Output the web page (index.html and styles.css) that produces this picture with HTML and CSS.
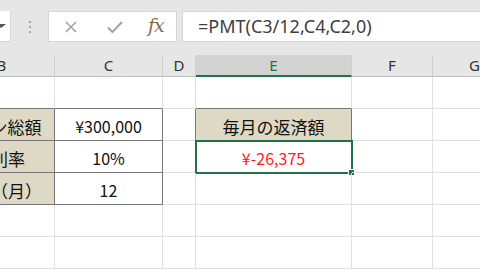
FILE: index.html
```html
<!DOCTYPE html>
<html lang="ja">
<head>
    <meta charset="UTF-8">
    <title>PMT</title>
    <link rel="stylesheet" href="styles.css">
</head>
<body>
    <div class="toolbar">
        <div class="name-box"><span class="drop"></span></div>
        <div class="grip"><i></i><i></i><i></i></div>
        <div class="icon-box">
            <svg class="btn" width="14" height="14" viewBox="0 0 14 14"><path d="M2 2 L12 12 M12 2 L2 12" stroke="#a3a3a3" stroke-width="1.6" fill="none"/></svg>
            <svg class="btn" width="18" height="14" viewBox="0 0 18 14"><path d="M2 7.5 L6.5 12 L16 2" stroke="#a3a3a3" stroke-width="2" fill="none"/></svg>
            <span class="fx">fx</span>
        </div>
        <div class="formula">=PMT(C3/12,C4,C2,0)</div>
    </div>

    <div class="sheet">
        <div class="col-head first">B</div>
        <div class="col-head">C</div>
        <div class="col-head">D</div>
        <div class="col-head selected">E</div>
        <div class="col-head">F</div>
        <div class="col-head">G</div>

        <div class="cell"></div>
        <div class="cell"></div>
        <div class="cell"></div>
        <div class="cell"></div>
        <div class="cell"></div>
        <div class="cell"></div>

        <div class="cell label">ローン総額</div>
        <div class="cell value">¥300,000</div>
        <div class="cell"></div>
        <div class="cell label">毎月の返済額</div>
        <div class="cell"></div>
        <div class="cell"></div>

        <div class="cell label">年利率</div>
        <div class="cell value">10%</div>
        <div class="cell"></div>
        <div class="cell value result active">¥-26,375</div>
        <div class="cell"></div>
        <div class="cell"></div>

        <div class="cell label">期間（月）</div>
        <div class="cell value">12</div>
        <div class="cell"></div>
        <div class="cell"></div>
        <div class="cell"></div>
        <div class="cell"></div>

        <div class="cell"></div>
        <div class="cell"></div>
        <div class="cell"></div>
        <div class="cell"></div>
        <div class="cell"></div>
        <div class="cell"></div>

        <div class="cell"></div>
        <div class="cell"></div>
        <div class="cell"></div>
        <div class="cell"></div>
        <div class="cell"></div>
        <div class="cell"></div>
    </div>
</body>
</html>
```

FILE: styles.css
```css
body {
    margin: 0;
    width: 480px;
    height: 270px;
    overflow: hidden;
    background: #fff;
    font-family: "Noto Sans CJK JP", "Noto Sans", sans-serif;
}

/* formula bar */
.toolbar {
    height: 55px;
    background: #e6e6e6;
    display: flex;
    align-items: flex-start;
    padding-top: 11px;
    box-sizing: border-box;
}

.name-box {
    width: 11px;
    height: 31px;
    background: #fff;
    border-right: 1px solid #d6d6d6;
    border-bottom: 1px solid #d6d6d6;
    box-sizing: border-box;
    position: relative;
}

.drop {
    position: absolute;
    left: -4px;
    top: 13px;
    border-left: 5px solid transparent;
    border-right: 5px solid transparent;
    border-top: 4px solid #555;
}

.grip {
    width: 37px;
    display: flex;
    flex-direction: column;
    align-items: center;
    gap: 3px;
    padding-top: 10px;
}

.grip i {
    width: 2px;
    height: 2px;
    background: #a8a8a8;
}

.icon-box {
    width: 129px;
    height: 31px;
    background: #fff;
    border: 1px solid #d6d6d6;
    box-sizing: border-box;
    display: flex;
    align-items: center;
    padding-left: 15px;
}

.icon-box .btn:first-child {
    margin-right: 28px;
}

.fx {
    margin-left: 24px;
    font-family: "DejaVu Serif", "Liberation Serif", serif;
    font-style: italic;
    font-size: 19px;
    color: #8a6a48;
    letter-spacing: -1px;
    line-height: 1;
    margin-top: -3px;
}

.formula {
    margin-left: 5px;
    flex: 1;
    height: 31px;
    background: #fff;
    border: 1px solid #d6d6d6;
    border-right: none;
    box-sizing: border-box;
    padding-left: 15px;
    font-family: "Noto Sans", sans-serif;
    font-size: 18px;
    line-height: 29px;
    color: #404040;
}

/* sheet grid */
.sheet {
    margin-left: -55px;
    display: grid;
    grid-template-columns: 110px 108px 33px 156px 81px 84px;
    grid-template-rows: 22px repeat(6, 32px);
}

.col-head {
    background: #e6e6e6;
    border-right: 1px solid #cfcfcf;
    border-bottom: 1px solid #bdbdbd;
    box-sizing: border-box;
    text-align: center;
    font-family: "Noto Sans", sans-serif;
    font-size: 15px;
    line-height: 21px;
    color: #333;
}

.col-head.first {
    padding-left: 4px;
}

.col-head.selected {
    background: #d3d3d3;
    border-bottom: 2px solid #217346;
    color: #217346;
}

.cell {
    border-right: 1px solid #e1e1e1;
    border-bottom: 1px solid #e1e1e1;
    box-sizing: border-box;
    text-align: center;
    font-size: 17px;
    line-height: 31px;
    padding-top: 2px;
    color: #111;
    position: relative;
}

/* B1,C1,E1 bottom edge of the tables */
.sheet .cell:nth-child(7),
.sheet .cell:nth-child(8),
.sheet .cell:nth-child(10) {
    border-bottom-color: #777;
}

/* D2 left edge of E2 */
.sheet .cell:nth-child(15) {
    border-right-color: #777;
}

.label {
    background: #ddd9c4;
    border-right-color: #777;
    border-bottom-color: #777;
}

.value {
    border-right-color: #777;
    border-bottom-color: #777;
    font-size: 16px;
}

.result {
    color: #ff1a1a;
}

.active {
    outline: 2px solid #217346;
    outline-offset: -1px;
}

.active::after {
    content: "";
    position: absolute;
    right: -4px;
    bottom: -4px;
    width: 5px;
    height: 5px;
    background: #217346;
    border: 1px solid #fff;
}
```
